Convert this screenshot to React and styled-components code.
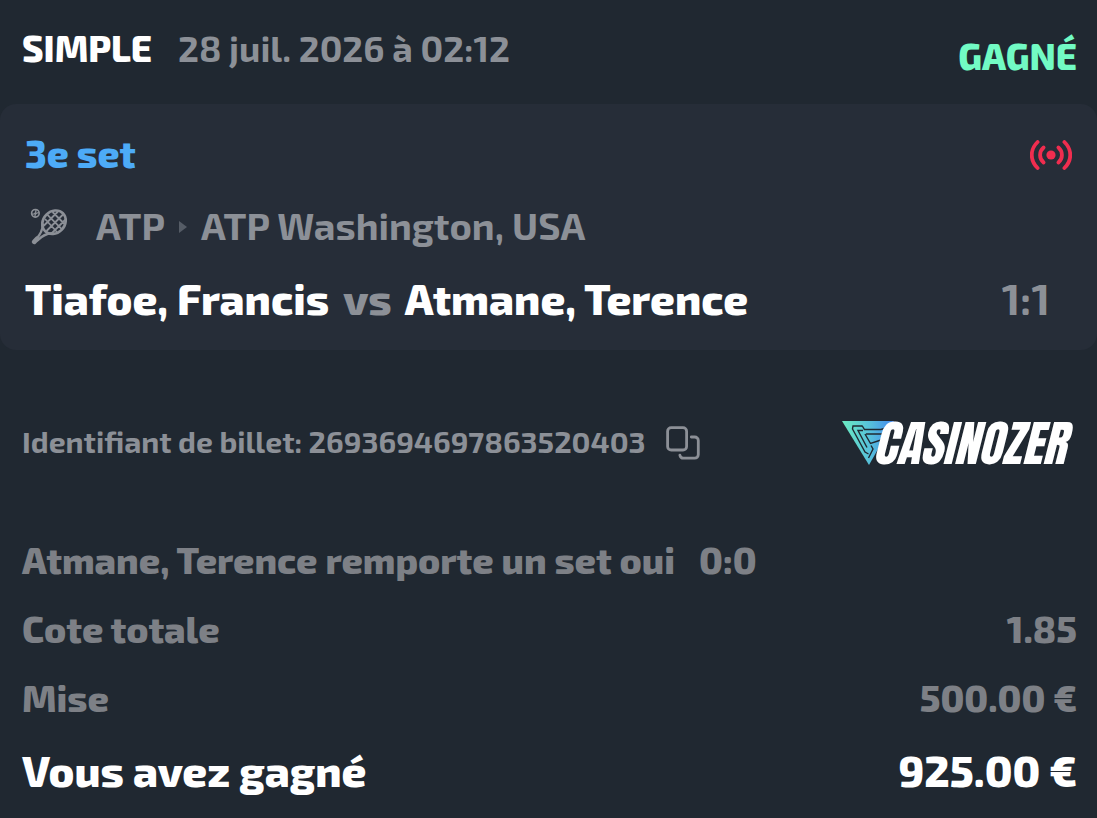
import React from 'react';
import styled, { createGlobalStyle } from 'styled-components';

const details = [
  { label: 'Atmane, Terence remporte un set oui', note: '0:0' },
  { label: 'Cote totale', value: '1.85' },
  { label: 'Mise', value: '500.00 €' },
  { label: 'Vous avez gagné', value: '925.00 €', total: true },
];

const LiveIcon = () => (
  <svg width="42" height="30" viewBox="0 0 42 30" fill="none" stroke="#f02d4f" strokeWidth="3.8" strokeLinecap="round" role="img" aria-label="En direct">
    <circle cx="21" cy="15" r="4.6" fill="#f02d4f" stroke="none" />
    <path d="M7.6 2C-.2 9.500-.2 20.500 7.600 28" />
    <path d="M13.600 7.500C8.900 11.500 8.900 18.500 13.600 22.500" />
    <path d="M34.400 2C42.200 9.500 42.200 20.500 34.400 28" />
    <path d="M28.400 7.500C33.100 11.500 33.100 18.500 28.400 22.500" />
  </svg>
);

const TennisIcon = () => (
  <svg width="38" height="38" viewBox="0 0 38 38" fill="none" stroke="currentColor" strokeLinecap="round" aria-hidden="true">
    <circle cx="5.400" cy="5.300" r="3.800" strokeWidth="1.600" />
    <path d="M2.300 6.200C4.800 6.200 6 4.800 6 1.900M4.900 8.700C4.900 6.200 6.200 4.900 8.600 4.700" strokeWidth="1.300" />
    <ellipse cx="24" cy="14.200" rx="12.600" ry="10.800" transform="rotate(-45 24 14.200)" strokeWidth="2.600" />
    <path
      d="M15.500 11.500L26.500 23.500M17.500 6.800L31.300 20.600M23 4.500L34 15.500M17 22.500L33 6.500M14 17.500L27.500 4M22.500 24.500L35 12"
      strokeWidth="1.800"
    />
    <path d="M12.900 16.500C12.600 22.500 10.500 26.300 6.200 31M21.500 25.300C15.500 25.700 12 28 7.500 32.300" strokeWidth="2.400" />
    <path d="M7 30.800L4.200 33.800" strokeWidth="4.800" />
  </svg>
);

const CopyIcon = () => (
  <svg width="34" height="34" viewBox="0 0 34 34" fill="none" stroke="currentColor" strokeWidth="2.800" strokeLinecap="round" aria-hidden="true">
    <rect x="1.600" y="1.600" width="19" height="22.400" rx="3.600" />
    <path d="M25.300 11h3.400a3.600 3.600 0 0 1 3.600 3.600v14a3.600 3.600 0 0 1-3.600 3.600H17.400a3.600 3.600 0 0 1-3.500-3" />
  </svg>
);

const LogoMark = () => (
  <svg width="52" height="44" viewBox="0 0 52 44" aria-hidden="true">
    <defs>
      <linearGradient id="mark" x1="0" y1="0" x2="1" y2="0">
        <stop offset="0" stopColor="#6bebc0" />
        <stop offset="0.550" stopColor="#56bfdc" />
        <stop offset="1" stopColor="#4488ee" />
      </linearGradient>
    </defs>
    <path d="M0 0H52L27 44Z" fill="url(#mark)" />
    <g fill="none" stroke="#202831" strokeWidth="1.400">
      <path d="M20 5H11L10.500 8L23 31L26.500 33" />
      <path d="M21 9.500H16L25 26.500" />
      <path d="M20 4.500L22.500 8.500H39L42 7.500M24 13H42" />
      <path d="M23 13L28.500 22.500L39 19M29 24.500L31 28L26.500 37" />
    </g>
    <path d="M52 4L38 26L32 44H52Z" fill="#202831" />
  </svg>
);

const App = () => {
  return (
    <>
      <GlobalStyle />
      <Ticket>
        <Header>
          <Heading>
            <Kind>SIMPLE</Kind>
            <time dateTime="2026-07-28T02:12">28 juil. 2026 à 02:12</time>
          </Heading>
          <Status>GAGNÉ</Status>
        </Header>

        <EventCard>
          <CardRow $height={46}>
            <Period>3e set</Period>
            <LiveIcon />
          </CardRow>
          <CardRow $height={50}>
            <League>
              <TennisIcon />
              <Path>
                <Label>ATP</Label>
                <Caret />
                <Label>ATP Washington, USA</Label>
              </Path>
            </League>
          </CardRow>
          <CardRow $height={48}>
            <Teams>
              Tiafoe, Francis <span>vs</span> Atmane, Terence
            </Teams>
            <Score>1:1</Score>
          </CardRow>
        </EventCard>

        <Reference>
          <TicketId>
            <Label>Identifiant de billet: 2693694697863520403</Label>
            <CopyButton type="button" aria-label="Copier l'identifiant">
              <CopyIcon />
            </CopyButton>
          </TicketId>
          <Brand href="#">
            <LogoMark />
            <BrandName>CASINOZER</BrandName>
          </Brand>
        </Reference>

        <Details>
          {details.map((row) => (
            <DetailRow key={row.label} $total={row.total}>
              <dt>{row.label}</dt>
              {row.note && <Note>{row.note}</Note>}
              {row.value && <Value>{row.value}</Value>}
            </DetailRow>
          ))}
        </Details>
      </Ticket>
    </>
  );
};

const GlobalStyle = createGlobalStyle`
  body {
    margin: 0;
    background: #202831;
  }

  * {
    box-sizing: border-box;
  }
`;

const Ticket = styled.main`
  min-height: 100vh;
  background: #202831;
  color: #8c9097;
  font-family: 'Exo 2', 'Noto Sans', sans-serif;
  font-size: 36px;
  font-weight: 700;
  line-height: 44px;
  white-space: nowrap;
`;

const Header = styled.header`
  display: flex;
  justify-content: space-between;
  padding: 26px 20px;
  height: 104px;
`;

const Heading = styled.div`
  display: flex;
  gap: 26px;
  padding-left: 2px;
`;

const Kind = styled.span`
  color: #fff;
  font-weight: 800;
`;

const Status = styled.strong`
  align-self: flex-end;
  color: #72fbc4;
  font-weight: 800;
`;

const EventCard = styled.section`
  display: flex;
  flex-direction: column;
  gap: 24px;
  padding: 28px 25px 26px;
  border-radius: 16px;
  background: #262d38;
`;

const CardRow = styled.div`
  display: flex;
  align-items: center;
  justify-content: space-between;
  height: ${(props) => props.$height}px;
`;

/* the font sits low in its line, so text beside an icon gets room below */
const Label = styled.span`
  padding-bottom: 4px;
`;

const Period = styled(Label)`
  color: #4dabf7;
  font-size: 38px;
  font-weight: 800;
`;

const League = styled.div`
  display: flex;
  align-items: center;
  gap: 28px;
  padding-left: 5px;
`;

const Path = styled.div`
  display: flex;
  align-items: center;
  gap: 14px;
  font-size: 38px;
`;

const Caret = styled.i`
  border-left: 8px solid #555c66;
  border-top: 6px solid transparent;
  border-bottom: 6px solid transparent;
`;

const Teams = styled.h1`
  margin: 0;
  padding-bottom: 4px;
  color: #fff;
  font-size: 43px;
  font-weight: 800;

  span {
    margin: 0 5px;
    color: #8c9097;
  }
`;

const Score = styled(Label)`
  padding-right: 22px;
  font-size: 43px;
`;

const Reference = styled.section`
  display: flex;
  align-items: center;
  justify-content: space-between;
  padding: 69px 24px 70px 22px;
`;

const TicketId = styled.div`
  display: flex;
  align-items: center;
  gap: 20px;
  font-size: 30px;
`;

const CopyButton = styled.button`
  display: flex;
  padding: 0;
  border: 0;
  background: none;
  color: inherit;
  cursor: pointer;
`;

const Brand = styled.a`
  display: flex;
  align-items: center;
  color: #fff;
  text-decoration: none;
`;

const BrandName = styled.span`
  margin-left: -22px;
  padding-right: 8px;
  font-family: Anton, 'Bebas Neue', 'League Gothic', Oswald, 'Barlow Condensed', 'Roboto Condensed', 'Liberation Sans Narrow', sans-serif;
  font-size: 49px;
  font-style: italic;
  font-weight: 400;
`;

const Details = styled.dl`
  display: flex;
  flex-direction: column;
  gap: 25px;
  margin: 0;
  padding: 0 20px 22px 22px;
  color: #7d8086;
`;

const DetailRow = styled.div`
  display: flex;
  gap: 24px;
  color: ${(props) => (props.$total ? '#fff' : 'inherit')};
  font-size: ${(props) => (props.$total ? 43 : 37)}px;
  font-weight: 800;
  line-height: ${(props) => (props.$total ? 52 : 44)}px;
`;

const Note = styled.dd`
  margin: 0;
`;

const Value = styled.dd`
  margin: 0 0 0 auto;
`;

export default App;
